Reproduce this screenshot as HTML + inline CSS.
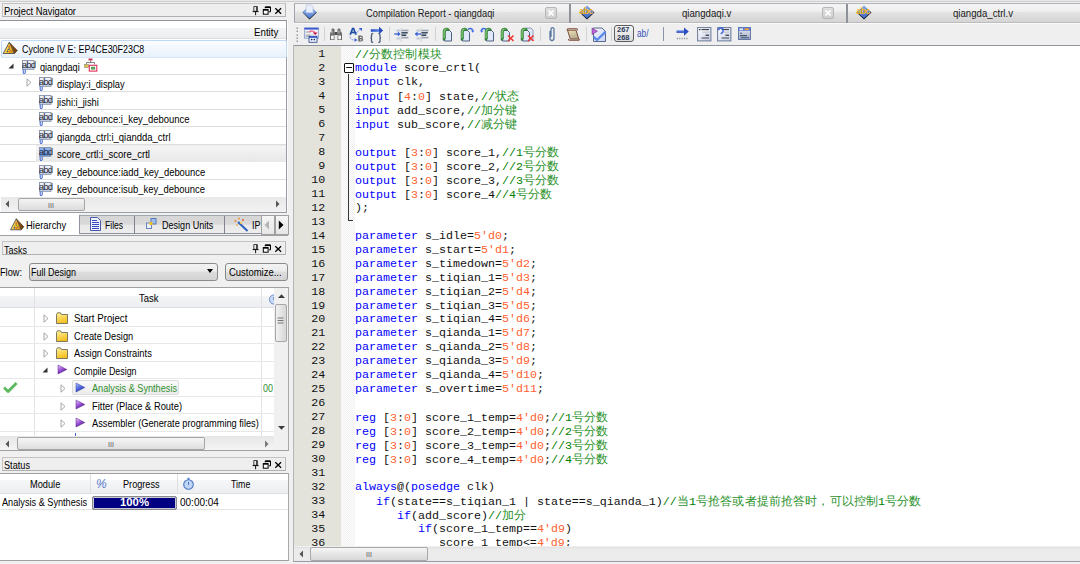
<!DOCTYPE html><html><head><meta charset="utf-8"><style>
html,body{margin:0;padding:0}
body{width:1080px;height:564px;overflow:hidden;position:relative;background:#f0f0f0;font-family:"Liberation Sans",sans-serif}
body div,body span,body svg{position:absolute}
.t{white-space:pre;line-height:1;font-family:"Liberation Sans",sans-serif}
#code .ln{left:0;width:31.8px;text-align:right;font-family:"Liberation Mono",monospace;font-size:11.667px;line-height:11.667px;color:#111;white-space:pre}
#code .cd{left:61.5px;font-family:"Liberation Mono",monospace;font-size:11.667px;line-height:11.667px;color:#111;white-space:pre}
#code b{font-weight:normal}
#code i{font-style:normal;font-size:11.5px;display:inline-block;width:12.15px;text-align:center;opacity:.85}
</style></head><body>
<svg width="0" height="0" style="position:absolute"><defs>
<linearGradient id="gabd" x1="0" y1="0" x2="0" y2="1"><stop offset="0" stop-color="#f4f6fb"/><stop offset="1" stop-color="#c4d0e8"/></linearGradient>
<linearGradient id="gabdS" x1="0" y1="0" x2="0" y2="1"><stop offset="0" stop-color="#90b8f0"/><stop offset="1" stop-color="#5a90e0"/></linearGradient>
</defs></svg>
<div style="left:0px;top:0px;width:1080px;height:1px;background:#e9e9e9"></div>
<div style="left:0px;top:1px;width:1080px;height:1px;background:#cdcdcd"></div>
<div style="left:2px;top:3px;width:282px;height:12px;background:#eeeeee;border:1px solid #c4c4c4;border-right-color:#b8b8b8;border-bottom-color:#b0b0b0"></div>
<span class="t" style="left:4.00px;top:6.41px;font-size:10.5px;color:#000;letter-spacing:0.000px;transform:scaleX(0.8940);transform-origin:0 0;">Project Navigator</span>
<svg style="left:252px;top:5.5px" width="32" height="11" viewBox="0 0 32 11"><path d="M1.8 0.5h3.6v4.8h-3.6z" fill="#e8e8e8" stroke="#333" stroke-width="0.9"/><path d="M4.6 0.8v4.5" stroke="#444" stroke-width="1.2"/><path d="M0.6 5.6h6M3.6 5.6v3.6" stroke="#111" stroke-width="1"/><path d="M13.2 2.3V1h5.3v4.8h-1.6" fill="none" stroke="#000" stroke-width="1"/><path d="M13.2 1.3h5.3" stroke="#000" stroke-width="1.5"/><rect x="11.3" y="3.6" width="4.8" height="4.6" fill="#fff" stroke="#000" stroke-width="1"/><path d="M11.3 3.9h4.8" stroke="#000" stroke-width="1.5"/><path d="M23.3 2.2l5.8 5.6M29.1 2.2l-5.8 5.6" stroke="#000" stroke-width="1.25"/></svg>
<div style="left:0px;top:20px;width:286px;height:191.2px;background:#fff;border-top:1px solid #8f9399;border-right:1px solid #9a9ea4;border-bottom:1px solid #9a9ea4"></div>
<div style="left:0px;top:28px;width:286px;height:10px;background:linear-gradient(#f3f4f6,#eceef1)"></div>
<div style="left:0px;top:38px;width:286px;height:1px;background:#dcdde0"></div>
<span class="t" style="left:253.50px;top:26.51px;font-size:10.5px;color:#000;letter-spacing:0.000px;transform:scaleX(0.9253);transform-origin:0 0;">Entity</span>
<div style="left:1px;top:40px;width:284px;height:16px;background:linear-gradient(#fbfdff,#e8f1fc);border:1px solid #c0daf6;border-bottom-color:#d6e6f8;border-radius:2px"></div>
<div style="left:0px;top:73.6px;width:286px;height:1.4px;background:#dedede"></div>
<div style="left:0px;top:91.1px;width:286px;height:1.4px;background:#dedede"></div>
<div style="left:0px;top:108.6px;width:286px;height:1.4px;background:#dedede"></div>
<div style="left:0px;top:126.1px;width:286px;height:1.4px;background:#dedede"></div>
<div style="left:0px;top:143.60000000000002px;width:286px;height:1.4px;background:#dedede"></div>
<div style="left:0px;top:161.10000000000002px;width:286px;height:1.4px;background:#dedede"></div>
<div style="left:0px;top:178.60000000000002px;width:286px;height:1.4px;background:#dedede"></div>
<div style="left:36px;top:145px;width:250px;height:16px;background:linear-gradient(#f4f4f4,#e8e8e8);border-top:1px solid #ececec"></div>
<span class="t" style="left:22.20px;top:44.21px;font-size:10.5px;color:#000;letter-spacing:0.000px;transform:scaleX(0.8484);transform-origin:0 0;">Cyclone IV E: EP4CE30F23C8</span>
<span class="t" style="left:39.70px;top:61.71px;font-size:10.5px;color:#000;letter-spacing:0.000px;transform:scaleX(0.8717);transform-origin:0 0;">qiangdaqi</span>
<span class="t" style="left:57.00px;top:79.21px;font-size:10.5px;color:#000;letter-spacing:0.000px;transform:scaleX(0.8842);transform-origin:0 0;">display:i_display</span>
<span class="t" style="left:57.00px;top:96.71px;font-size:10.5px;color:#000;letter-spacing:0.000px;transform:scaleX(0.8844);transform-origin:0 0;">jishi:i_jishi</span>
<span class="t" style="left:57.00px;top:114.21px;font-size:10.5px;color:#000;letter-spacing:0.000px;transform:scaleX(0.8964);transform-origin:0 0;">key_debounce:i_key_debounce</span>
<span class="t" style="left:57.00px;top:131.71px;font-size:10.5px;color:#000;letter-spacing:0.000px;transform:scaleX(0.9044);transform-origin:0 0;">qiangda_ctrl:i_qiandda_ctrl</span>
<span class="t" style="left:57.00px;top:149.21px;font-size:10.5px;color:#000;letter-spacing:0.000px;transform:scaleX(0.9098);transform-origin:0 0;">score_crtl:i_score_crtl</span>
<span class="t" style="left:57.00px;top:166.71px;font-size:10.5px;color:#000;letter-spacing:0.000px;transform:scaleX(0.8976);transform-origin:0 0;">key_debounce:iadd_key_debounce</span>
<span class="t" style="left:57.00px;top:184.21px;font-size:10.5px;color:#000;letter-spacing:0.000px;transform:scaleX(0.8983);transform-origin:0 0;">key_debounce:isub_key_debounce</span>
<svg style="left:0px;top:40px" width="20" height="16" viewBox="0 0 20 16"><defs><linearGradient id="gw" x1="0" y1="0" x2="1" y2="0.4"><stop offset="0" stop-color="#fff080"/><stop offset="0.7" stop-color="#f4c020"/><stop offset="1" stop-color="#e09010"/></linearGradient><linearGradient id="gw2" x1="0" y1="0" x2="1" y2="0"><stop offset="0" stop-color="#c07010"/><stop offset="1" stop-color="#603008"/></linearGradient></defs><path d="M9.3 2.3L17.3 10.6L14.5 13.5Z" fill="url(#gw2)" stroke="#4a3a20" stroke-width="0.7" stroke-linejoin="round"/><path d="M9.3 2.3L3.2 13.5H14.5Z" fill="url(#gw)" stroke="#3a4050" stroke-width="0.8" stroke-linejoin="round"/><circle cx="9.2" cy="6.6" r="0.8" fill="#e04a30"/><path d="M9.2 7.2v2.8M7.6 10v1.5M10.8 10v1.5" stroke="#4a5a70" stroke-width="0.7"/><circle cx="7.4" cy="11.6" r="0.7" fill="#3050a0"/><circle cx="9.3" cy="11.6" r="0.7" fill="#e04a30"/><circle cx="8.4" cy="9.4" r="0.6" fill="#3050a0"/></svg>
<svg style="left:8px;top:63px" width="6" height="6" viewBox="0 0 6 6"><path d="M5.5 0.5V5.5H0.5Z" fill="#333"/></svg>
<svg style="left:22px;top:59.5px" width="14" height="15" viewBox="0 0 14 15"><rect x="0.5" y="0.5" width="11.5" height="8.8" fill="url(#gabd)" stroke="#8592a8" stroke-width="0.9"/><text x="-0.2" y="8.3" font-family="Liberation Sans" font-size="9.6" fill="#2a2a38" letter-spacing="-0.9">abd</text><path d="M1.2 9.5v3.5l1 1 1-1V9.5" fill="none" stroke="#3a5fd0" stroke-width="1"/></svg>
<svg style="left:84px;top:57.5px" width="14" height="14" viewBox="0 0 14 14"><rect x="4.5" y="0.5" width="4" height="2" fill="#c83a5a"/><path d="M6.5 2.5v2M2.5 4.5h8M2.5 4.5v2M10.5 4.5v2" stroke="#666" stroke-width="0.8" fill="none"/><rect x="0.5" y="6.5" width="4" height="3" fill="#e0c050" stroke="#8a8a6a" stroke-width="0.6"/><rect x="5.3" y="7.3" width="7.5" height="5.8" fill="#fff" stroke="#e0305a" stroke-width="1.1"/><rect x="7" y="8.8" width="4.2" height="2.8" fill="#5aa05a"/></svg>
<svg style="left:26px;top:78px" width="6" height="9" viewBox="0 0 6 9"><path d="M1 0.8L5 4.5L1 8.2Z" fill="#fff" stroke="#a6a6a6" stroke-width="1"/></svg>
<svg style="left:39px;top:77.0px" width="14" height="15" viewBox="0 0 14 15"><rect x="0.5" y="0.5" width="11.5" height="8.8" fill="url(#gabd)" stroke="#8592a8" stroke-width="0.9"/><text x="-0.2" y="8.3" font-family="Liberation Sans" font-size="9.6" fill="#2a2a38" letter-spacing="-0.9">abd</text><path d="M1.2 9.5v3.5l1 1 1-1V9.5" fill="none" stroke="#3a5fd0" stroke-width="1"/></svg>
<svg style="left:39px;top:94.5px" width="14" height="15" viewBox="0 0 14 15"><rect x="0.5" y="0.5" width="11.5" height="8.8" fill="url(#gabd)" stroke="#8592a8" stroke-width="0.9"/><text x="-0.2" y="8.3" font-family="Liberation Sans" font-size="9.6" fill="#2a2a38" letter-spacing="-0.9">abd</text><path d="M1.2 9.5v3.5l1 1 1-1V9.5" fill="none" stroke="#3a5fd0" stroke-width="1"/></svg>
<svg style="left:39px;top:112.0px" width="14" height="15" viewBox="0 0 14 15"><rect x="0.5" y="0.5" width="11.5" height="8.8" fill="url(#gabd)" stroke="#8592a8" stroke-width="0.9"/><text x="-0.2" y="8.3" font-family="Liberation Sans" font-size="9.6" fill="#2a2a38" letter-spacing="-0.9">abd</text><path d="M1.2 9.5v3.5l1 1 1-1V9.5" fill="none" stroke="#3a5fd0" stroke-width="1"/></svg>
<svg style="left:39px;top:129.5px" width="14" height="15" viewBox="0 0 14 15"><rect x="0.5" y="0.5" width="11.5" height="8.8" fill="url(#gabd)" stroke="#8592a8" stroke-width="0.9"/><text x="-0.2" y="8.3" font-family="Liberation Sans" font-size="9.6" fill="#2a2a38" letter-spacing="-0.9">abd</text><path d="M1.2 9.5v3.5l1 1 1-1V9.5" fill="none" stroke="#3a5fd0" stroke-width="1"/></svg>
<svg style="left:39px;top:147.0px" width="14" height="15" viewBox="0 0 14 15"><rect x="0.5" y="0.5" width="11.5" height="8.8" fill="url(#gabdS)" stroke="#8592a8" stroke-width="0.9"/><text x="-0.2" y="8.3" font-family="Liberation Sans" font-size="9.6" fill="#2a2a38" letter-spacing="-0.9">abd</text><path d="M1.2 9.5v3.5l1 1 1-1V9.5" fill="none" stroke="#3a5fd0" stroke-width="1"/></svg>
<svg style="left:39px;top:164.5px" width="14" height="15" viewBox="0 0 14 15"><rect x="0.5" y="0.5" width="11.5" height="8.8" fill="url(#gabd)" stroke="#8592a8" stroke-width="0.9"/><text x="-0.2" y="8.3" font-family="Liberation Sans" font-size="9.6" fill="#2a2a38" letter-spacing="-0.9">abd</text><path d="M1.2 9.5v3.5l1 1 1-1V9.5" fill="none" stroke="#3a5fd0" stroke-width="1"/></svg>
<svg style="left:39px;top:182.0px" width="14" height="15" viewBox="0 0 14 15"><rect x="0.5" y="0.5" width="11.5" height="8.8" fill="url(#gabd)" stroke="#8592a8" stroke-width="0.9"/><text x="-0.2" y="8.3" font-family="Liberation Sans" font-size="9.6" fill="#2a2a38" letter-spacing="-0.9">abd</text><path d="M1.2 9.5v3.5l1 1 1-1V9.5" fill="none" stroke="#3a5fd0" stroke-width="1"/></svg>
<div style="left:1px;top:196.5px;width:285px;height:15.5px;background:linear-gradient(#e8e8e8,#f2f2f2)"></div>
<div style="left:17.5px;top:197.5px;width:67px;height:13px;background:linear-gradient(#f4f4f4,#dcdcdc);border:1px solid #a5a5a5;border-radius:2px;box-sizing:border-box"></div>
<span class="t" style="left:48.00px;top:201.57px;font-size:7px;color:#555;letter-spacing:0.000px;">III</span>
<svg style="left:5px;top:200px" width="5" height="8" viewBox="0 0 5 8"><path d="M4 0.5L0.5 4L4 7.5Z" fill="#555"/></svg>
<svg style="left:275px;top:200px" width="5" height="8" viewBox="0 0 5 8"><path d="M1 0.5L4.5 4L1 7.5Z" fill="#555"/></svg>
<div style="left:0px;top:234.5px;width:288px;height:1px;background:#9da1a6"></div>
<div style="left:0px;top:213px;width:79px;height:22px;background:#fff"></div>
<div style="left:79px;top:215px;width:55.5px;height:18.5px;background:linear-gradient(#d6d6d6 0%,#d9d9d9 45%,#e9e9e9 52%,#ededed 92%,#fafafa 100%);border-top:1px solid #a2a6ae;box-sizing:border-box"></div>
<div style="left:134.5px;top:215px;width:89.5px;height:18.5px;background:linear-gradient(#d6d6d6 0%,#d9d9d9 45%,#e9e9e9 52%,#ededed 92%,#fafafa 100%);border-top:1px solid #a2a6ae;box-sizing:border-box"></div>
<div style="left:224px;top:215px;width:37px;height:18.5px;background:linear-gradient(#d6d6d6 0%,#d9d9d9 45%,#e9e9e9 52%,#ededed 92%,#fafafa 100%);border-top:1px solid #a2a6ae;box-sizing:border-box"></div>
<div style="left:79px;top:233.3px;width:182px;height:1.2px;background:#8e929a"></div>
<div style="left:78.6px;top:215px;width:1.2px;height:19px;background:#9094a0"></div>
<div style="left:133.9px;top:215.5px;width:1.2px;height:18px;background:#80848e"></div>
<div style="left:223.5px;top:215.5px;width:1.2px;height:18px;background:#80848e"></div>
<span class="t" style="left:26.40px;top:219.71px;font-size:10.5px;color:#000;letter-spacing:0.000px;transform:scaleX(0.8970);transform-origin:0 0;">Hierarchy</span>
<span class="t" style="left:104.90px;top:219.51px;font-size:10.5px;color:#000;letter-spacing:0.000px;transform:scaleX(0.8165);transform-origin:0 0;">Files</span>
<span class="t" style="left:162.00px;top:219.51px;font-size:10.5px;color:#000;letter-spacing:0.000px;transform:scaleX(0.8618);transform-origin:0 0;">Design Units</span>
<span class="t" style="left:251.50px;top:219.51px;font-size:10.5px;color:#000;letter-spacing:0.000px;transform:scaleX(0.8567);transform-origin:0 0;">IP</span>
<svg style="left:8.5px;top:216.5px" width="16" height="15" viewBox="0 0 16 15"><path d="M7.3 1.8L14.8 9.8L12.3 12.8Z" fill="url(#gw2)" stroke="#4a3a20" stroke-width="0.7" stroke-linejoin="round"/><path d="M7.3 1.8L1.5 12.8H12.3Z" fill="url(#gw)" stroke="#3a4050" stroke-width="0.8" stroke-linejoin="round"/><circle cx="7.2" cy="6" r="0.8" fill="#e04a30"/><path d="M7.2 6.6v2.8M5.6 9.4v1.5M8.8 9.4v1.5" stroke="#4a5a70" stroke-width="0.7"/><circle cx="5.4" cy="11" r="0.7" fill="#3050a0"/><circle cx="7.3" cy="11" r="0.7" fill="#e04a30"/></svg>
<svg style="left:90px;top:216.5px" width="11" height="14" viewBox="0 0 11 14"><path d="M0.5 0.5h7l3 3v10h-10z" fill="#eef2ff" stroke="#4b5aa8" stroke-width="1"/><path d="M2 3.5h5M2 5.5h7M2 7.5h7M2 9.5h7M2 11.5h7" stroke="#3a4cc0" stroke-width="1"/></svg>
<svg style="left:146px;top:218px" width="11" height="11" viewBox="0 0 11 11"><rect x="0.5" y="5" width="5" height="5.5" fill="#e8f0ff" stroke="#6c84b8" stroke-width="1"/><rect x="5" y="0.5" width="5" height="5.5" fill="#9cc0f0" stroke="#5a78b0" stroke-width="1"/><rect x="3.5" y="4" width="3" height="3" fill="#f0c020"/></svg>
<svg style="left:234px;top:216.5px" width="15" height="15" viewBox="0 0 15 15"><path d="M4 5L13.5 14" stroke="#3060c0" stroke-width="2"/><circle cx="1.5" cy="4" r="1" fill="#f08030"/><circle cx="5" cy="1.5" r="1" fill="#f0a030"/><circle cx="9" cy="3" r="1" fill="#e06020"/><circle cx="3" cy="8" r="0.9" fill="#f0b040"/><circle cx="7" cy="6" r="1" fill="#ffd040"/></svg>
<div style="left:260.5px;top:215px;width:14px;height:20px;background:linear-gradient(#f5f5f5,#e6e6e6);border:1px solid #a0a0a0;box-sizing:border-box"></div>
<div style="left:274.5px;top:215px;width:14px;height:20px;background:linear-gradient(#f5f5f5,#e6e6e6);border:1px solid #a0a0a0;box-sizing:border-box"></div>
<svg style="left:264px;top:220px" width="6" height="10" viewBox="0 0 6 10"><path d="M5 0.5L0.5 5L5 9.5Z" fill="#b4b4b4"/></svg>
<svg style="left:278px;top:220px" width="7" height="10" viewBox="0 0 7 10"><path d="M0.8 0.5L5.5 5L0.8 9.5Z" fill="#000"/></svg>
<div style="left:287.2px;top:20px;width:1px;height:193px;background:#fbfbfb"></div>
<div style="left:2px;top:241.3px;width:282px;height:12px;background:#eeeeee;border:1px solid #c4c4c4;border-right-color:#b8b8b8;border-bottom-color:#b0b0b0"></div>
<span class="t" style="left:4.00px;top:244.71px;font-size:10.5px;color:#000;letter-spacing:0.000px;transform:scaleX(0.8569);transform-origin:0 0;">Tasks</span>
<svg style="left:252px;top:243.8px" width="32" height="11" viewBox="0 0 32 11"><path d="M1.8 0.5h3.6v4.8h-3.6z" fill="#e8e8e8" stroke="#333" stroke-width="0.9"/><path d="M4.6 0.8v4.5" stroke="#444" stroke-width="1.2"/><path d="M0.6 5.6h6M3.6 5.6v3.6" stroke="#111" stroke-width="1"/><path d="M13.2 2.3V1h5.3v4.8h-1.6" fill="none" stroke="#000" stroke-width="1"/><path d="M13.2 1.3h5.3" stroke="#000" stroke-width="1.5"/><rect x="11.3" y="3.6" width="4.8" height="4.6" fill="#fff" stroke="#000" stroke-width="1"/><path d="M11.3 3.9h4.8" stroke="#000" stroke-width="1.5"/><path d="M23.3 2.2l5.8 5.6M29.1 2.2l-5.8 5.6" stroke="#000" stroke-width="1.25"/></svg>
<span class="t" style="left:-0.50px;top:266.51px;font-size:10.5px;color:#000;letter-spacing:0.000px;transform:scaleX(0.8770);transform-origin:0 0;">Flow:</span>
<div style="left:28.5px;top:262.5px;width:189px;height:18px;background:linear-gradient(#f3f3f3 0%,#ebebeb 45%,#dddddd 50%,#d3d3d3 100%);border:1px solid #8b8b8b;border-radius:3px;box-sizing:border-box"></div>
<span class="t" style="left:30.50px;top:266.51px;font-size:10.5px;color:#000;letter-spacing:0.000px;transform:scaleX(0.8568);transform-origin:0 0;">Full Design</span>
<svg style="left:207px;top:269px" width="6" height="4" viewBox="0 0 6 4"><path d="M0 0H6L3 4Z" fill="#000"/></svg>
<div style="left:224.5px;top:263px;width:63px;height:17.5px;background:linear-gradient(#f3f3f3 0%,#ebebeb 45%,#dddddd 50%,#d3d3d3 100%);border:1px solid #8b8b8b;border-radius:3px;box-sizing:border-box"></div>
<span class="t" style="left:229.00px;top:266.51px;font-size:10.5px;color:#000;letter-spacing:0.000px;transform:scaleX(0.9014);transform-origin:0 0;">Customize...</span>
<div style="left:0px;top:287px;width:289px;height:164px;background:#fff;border-top:1px solid #a0a0a0;border-right:1px solid #a9a9a9;border-bottom:1px solid #a0a0a0;box-sizing:border-box"></div>
<div style="left:0px;top:295.7px;width:273.7px;height:11.8px;background:linear-gradient(#f4f5f7,#eceef1)"></div>
<div style="left:0px;top:307.2px;width:273.7px;height:1px;background:#dedfe2"></div>
<div style="left:34.2px;top:288px;width:1px;height:148px;background:#e2e2e2"></div>
<div style="left:261.3px;top:288px;width:1px;height:148px;background:#e2e2e2"></div>
<span class="t" style="left:139.20px;top:293.11px;font-size:10.5px;color:#000;letter-spacing:0.000px;transform:scaleX(0.9032);transform-origin:0 0;">Task</span>
<svg style="left:267.5px;top:293px" width="7" height="12" viewBox="0 0 7 12"><circle cx="6" cy="6.5" r="4.6" fill="#c8daf4" stroke="#6a90d0" stroke-width="1"/><path d="M5.5 4v3" stroke="#6a90d0" stroke-width="0.9"/></svg>
<div style="left:0px;top:325.5px;width:273.7px;height:1.3px;background:#e8e8e8"></div>
<div style="left:0px;top:343.0px;width:273.7px;height:1.3px;background:#e8e8e8"></div>
<div style="left:0px;top:360.5px;width:273.7px;height:1.3px;background:#e8e8e8"></div>
<div style="left:0px;top:378.0px;width:273.7px;height:1.3px;background:#e8e8e8"></div>
<div style="left:0px;top:395.5px;width:273.7px;height:1.3px;background:#e8e8e8"></div>
<div style="left:0px;top:413.0px;width:273.7px;height:1.3px;background:#e8e8e8"></div>
<div style="left:0px;top:430.5px;width:273.7px;height:1.3px;background:#e8e8e8"></div>
<div style="left:273.7px;top:288px;width:14.3px;height:148px;background:#f0f0f0"></div>
<div style="left:274.5px;top:304.4px;width:12px;height:38px;background:linear-gradient(90deg,#f2f2f2,#e4e4e4 50%,#d6d6d6);border:1px solid #a7a7a7;border-radius:2px;box-sizing:border-box"></div>
<svg style="left:277px;top:317px" width="7" height="8" viewBox="0 0 7 8"><path d="M0.5 1h6M0.5 3.5h6M0.5 6h6" stroke="#666" stroke-width="0.9"/></svg>
<svg style="left:278px;top:294px" width="7" height="4" viewBox="0 0 7 4"><path d="M0 4L3.5 0.3L7 4Z" fill="#3a3a3a"/></svg>
<svg style="left:278px;top:426px" width="7" height="4" viewBox="0 0 7 4"><path d="M0 0L3.5 3.7L7 0Z" fill="#3a3a3a"/></svg>
<div style="left:0px;top:436.3px;width:273.7px;height:13.7px;background:linear-gradient(#e6e6e6,#f4f4f4)"></div>
<div style="left:16.5px;top:437px;width:188px;height:12.5px;background:linear-gradient(#f6f6f6,#dedede);border:1px solid #a5a5a5;border-radius:2px;box-sizing:border-box"></div>
<span class="t" style="left:108.00px;top:440.57px;font-size:7px;color:#555;letter-spacing:0.000px;">III</span>
<svg style="left:5px;top:440px" width="5" height="8" viewBox="0 0 5 8"><path d="M4 0.5L0.5 4L4 7.5Z" fill="#555"/></svg>
<svg style="left:264px;top:440px" width="5" height="8" viewBox="0 0 5 8"><path d="M1 0.5L4.5 4L1 7.5Z" fill="#777"/></svg>
<div style="left:273.7px;top:436.3px;width:14.3px;height:13.7px;background:#f0f0f0"></div>
<svg style="left:42.5px;top:314.0px" width="6" height="9" viewBox="0 0 6 9"><path d="M1 0.8L5 4.5L1 8.2Z" fill="#fff" stroke="#a6a6a6" stroke-width="1"/></svg>
<svg style="left:56px;top:312.0px" width="13" height="12" viewBox="0 0 13 12"><defs><linearGradient id="gf312" x1="0" y1="0" x2="0.3" y2="1"><stop offset="0" stop-color="#fff2a0"/><stop offset="1" stop-color="#f4c020"/></linearGradient></defs><path d="M0.5 2.5V11.5H11.5V2.5H5.5L4.5 0.8H1.5L0.5 2.5Z" fill="url(#gf312)" stroke="#6b6b58" stroke-width="0.9"/></svg>
<span class="t" style="left:73.70px;top:313.11px;font-size:10.5px;color:#000;letter-spacing:0.000px;transform:scaleX(0.9243);transform-origin:0 0;">Start Project</span>
<svg style="left:42.5px;top:331.5px" width="6" height="9" viewBox="0 0 6 9"><path d="M1 0.8L5 4.5L1 8.2Z" fill="#fff" stroke="#a6a6a6" stroke-width="1"/></svg>
<svg style="left:56px;top:329.5px" width="13" height="12" viewBox="0 0 13 12"><defs><linearGradient id="gf329" x1="0" y1="0" x2="0.3" y2="1"><stop offset="0" stop-color="#fff2a0"/><stop offset="1" stop-color="#f4c020"/></linearGradient></defs><path d="M0.5 2.5V11.5H11.5V2.5H5.5L4.5 0.8H1.5L0.5 2.5Z" fill="url(#gf329)" stroke="#6b6b58" stroke-width="0.9"/></svg>
<span class="t" style="left:73.70px;top:330.61px;font-size:10.5px;color:#000;letter-spacing:0.000px;transform:scaleX(0.8820);transform-origin:0 0;">Create Design</span>
<svg style="left:42.5px;top:349.0px" width="6" height="9" viewBox="0 0 6 9"><path d="M1 0.8L5 4.5L1 8.2Z" fill="#fff" stroke="#a6a6a6" stroke-width="1"/></svg>
<svg style="left:56px;top:347.0px" width="13" height="12" viewBox="0 0 13 12"><defs><linearGradient id="gf347" x1="0" y1="0" x2="0.3" y2="1"><stop offset="0" stop-color="#fff2a0"/><stop offset="1" stop-color="#f4c020"/></linearGradient></defs><path d="M0.5 2.5V11.5H11.5V2.5H5.5L4.5 0.8H1.5L0.5 2.5Z" fill="url(#gf347)" stroke="#6b6b58" stroke-width="0.9"/></svg>
<span class="t" style="left:73.70px;top:348.11px;font-size:10.5px;color:#000;letter-spacing:0.000px;transform:scaleX(0.8887);transform-origin:0 0;">Assign Constraints</span>
<svg style="left:42px;top:367.0px" width="6" height="6" viewBox="0 0 6 6"><path d="M5.5 0.5V5.5H0.5Z" fill="#333"/></svg>
<svg style="left:57px;top:364.0px" width="11" height="11" viewBox="0 0 11 11"><defs><linearGradient id="gp364" x1="0" y1="0" x2="0.6" y2="1"><stop offset="0" stop-color="#f0c8ff"/><stop offset="0.55" stop-color="#9a50d8"/><stop offset="1" stop-color="#4a1a80"/></linearGradient></defs><path d="M1 1L9.8 5.5L1 10Z" fill="url(#gp364)" stroke="#4a1a80" stroke-width="0.5" stroke-linejoin="round"/></svg>
<span class="t" style="left:73.70px;top:365.61px;font-size:10.5px;color:#000;letter-spacing:0.000px;transform:scaleX(0.8433);transform-origin:0 0;">Compile Design</span>
<div style="left:71.7px;top:379.7px;width:107.5px;height:15.5px;background:linear-gradient(#fafafa,#ececec);border:1px solid #dcdcdc;border-radius:2px;box-sizing:border-box"></div>
<svg style="left:60px;top:384.0px" width="6" height="9" viewBox="0 0 6 9"><path d="M1 0.8L5 4.5L1 8.2Z" fill="#fff" stroke="#a6a6a6" stroke-width="1"/></svg>
<svg style="left:75px;top:381.5px" width="11" height="11" viewBox="0 0 11 11"><defs><linearGradient id="gp381" x1="0" y1="0" x2="0.6" y2="1"><stop offset="0" stop-color="#b8c8ff"/><stop offset="0.55" stop-color="#5068e0"/><stop offset="1" stop-color="#2a3aa0"/></linearGradient></defs><path d="M1 1L9.8 5.5L1 10Z" fill="url(#gp381)" stroke="#2a3aa0" stroke-width="0.5" stroke-linejoin="round"/></svg>
<span class="t" style="left:91.50px;top:383.11px;font-size:10.5px;color:#2f8f2f;letter-spacing:0.000px;transform:scaleX(0.8721);transform-origin:0 0;">Analysis &amp; Synthesis</span>
<svg style="left:60px;top:401.5px" width="6" height="9" viewBox="0 0 6 9"><path d="M1 0.8L5 4.5L1 8.2Z" fill="#fff" stroke="#a6a6a6" stroke-width="1"/></svg>
<svg style="left:75px;top:399.0px" width="11" height="11" viewBox="0 0 11 11"><defs><linearGradient id="gp399" x1="0" y1="0" x2="0.6" y2="1"><stop offset="0" stop-color="#f0c8ff"/><stop offset="0.55" stop-color="#9a50d8"/><stop offset="1" stop-color="#4a1a80"/></linearGradient></defs><path d="M1 1L9.8 5.5L1 10Z" fill="url(#gp399)" stroke="#4a1a80" stroke-width="0.5" stroke-linejoin="round"/></svg>
<span class="t" style="left:91.50px;top:400.61px;font-size:10.5px;color:#000;letter-spacing:0.000px;transform:scaleX(0.8915);transform-origin:0 0;">Fitter (Place &amp; Route)</span>
<svg style="left:60px;top:419.0px" width="6" height="9" viewBox="0 0 6 9"><path d="M1 0.8L5 4.5L1 8.2Z" fill="#fff" stroke="#a6a6a6" stroke-width="1"/></svg>
<svg style="left:75px;top:416.5px" width="11" height="11" viewBox="0 0 11 11"><defs><linearGradient id="gp416" x1="0" y1="0" x2="0.6" y2="1"><stop offset="0" stop-color="#f0c8ff"/><stop offset="0.55" stop-color="#9a50d8"/><stop offset="1" stop-color="#4a1a80"/></linearGradient></defs><path d="M1 1L9.8 5.5L1 10Z" fill="url(#gp416)" stroke="#4a1a80" stroke-width="0.5" stroke-linejoin="round"/></svg>
<span class="t" style="left:91.50px;top:418.11px;font-size:10.5px;color:#000;letter-spacing:0.000px;transform:scaleX(0.8795);transform-origin:0 0;">Assembler (Generate programming files)</span>
<span class="t" style="left:263.20px;top:383.11px;font-size:10.5px;color:#2f8f2f;letter-spacing:0.000px;transform:scaleX(0.8562);transform-origin:0 0;">00</span>
<svg style="left:2.5px;top:382px" width="15" height="12" viewBox="0 0 15 12"><path d="M1.5 6.5L5 10L13.5 1.5" fill="none" stroke="#2a7a2a" stroke-width="1" opacity="0.35" transform="translate(0.6,0.8)"/><path d="M1 5.5L5 9.5L13.5 1" fill="none" stroke="#5cb85c" stroke-width="2.6" stroke-linejoin="round"/></svg>
<div style="left:75px;top:433px;width:1px;height:3px;background:#4060d0"></div>
<div style="left:2px;top:457px;width:282px;height:12px;background:#eeeeee;border:1px solid #c4c4c4;border-right-color:#b8b8b8;border-bottom-color:#b0b0b0"></div>
<span class="t" style="left:4.00px;top:460.41px;font-size:10.5px;color:#000;letter-spacing:0.000px;transform:scaleX(0.8734);transform-origin:0 0;">Status</span>
<svg style="left:252px;top:459.5px" width="32" height="11" viewBox="0 0 32 11"><path d="M1.8 0.5h3.6v4.8h-3.6z" fill="#e8e8e8" stroke="#333" stroke-width="0.9"/><path d="M4.6 0.8v4.5" stroke="#444" stroke-width="1.2"/><path d="M0.6 5.6h6M3.6 5.6v3.6" stroke="#111" stroke-width="1"/><path d="M13.2 2.3V1h5.3v4.8h-1.6" fill="none" stroke="#000" stroke-width="1"/><path d="M13.2 1.3h5.3" stroke="#000" stroke-width="1.5"/><rect x="11.3" y="3.6" width="4.8" height="4.6" fill="#fff" stroke="#000" stroke-width="1"/><path d="M11.3 3.9h4.8" stroke="#000" stroke-width="1.5"/><path d="M23.3 2.2l5.8 5.6M29.1 2.2l-5.8 5.6" stroke="#000" stroke-width="1.25"/></svg>
<div style="left:0px;top:473.3px;width:289px;height:88px;background:#fff;border-top:1px solid #a0a0a0;border-right:1px solid #a9a9a9;border-bottom:1px solid #a0a0a0;box-sizing:border-box"></div>
<div style="left:0px;top:480px;width:288px;height:13px;background:linear-gradient(#f6f7f8,#eceef1)"></div>
<div style="left:0px;top:492.7px;width:288px;height:1px;background:#dcdde0"></div>
<div style="left:90.2px;top:474px;width:1px;height:19px;background:#e0e0e0"></div>
<div style="left:177.3px;top:474px;width:1px;height:19px;background:#e0e0e0"></div>
<div style="left:0px;top:508.8px;width:288px;height:1px;background:#e4e4e4"></div>
<span class="t" style="left:29.50px;top:478.51px;font-size:10.5px;color:#000;letter-spacing:0.000px;transform:scaleX(0.8799);transform-origin:0 0;">Module</span>
<span class="t" style="left:123.20px;top:478.51px;font-size:10.5px;color:#000;letter-spacing:0.000px;transform:scaleX(0.8711);transform-origin:0 0;">Progress</span>
<span class="t" style="left:230.70px;top:478.51px;font-size:10.5px;color:#000;letter-spacing:0.000px;transform:scaleX(0.8413);transform-origin:0 0;">Time</span>
<span class="t" style="left:2.40px;top:496.91px;font-size:10.5px;color:#000;letter-spacing:0.000px;transform:scaleX(0.8721);transform-origin:0 0;">Analysis &amp; Synthesis</span>
<span class="t" style="left:180.20px;top:496.91px;font-size:10.5px;color:#000;letter-spacing:0.000px;transform:scaleX(0.9517);transform-origin:0 0;">00:00:04</span>
<svg style="left:96px;top:477px" width="12" height="13" viewBox="0 0 12 13"><text x="0" y="11" font-family="Liberation Sans" font-style="italic" font-size="12" fill="#5a7ad0">%</text></svg>
<svg style="left:183px;top:477px" width="11" height="13" viewBox="0 0 11 13"><circle cx="5.5" cy="7.5" r="4.8" fill="#c0d4f4" stroke="#4a78c8" stroke-width="1.1"/><rect x="4.5" y="0.8" width="2" height="2" fill="#4a78c8"/><path d="M5.5 5v3" stroke="#4a78c8" stroke-width="1"/></svg>
<div style="left:91.7px;top:495.5px;width:85px;height:14px;background:#000080;border:1px solid #8a8a8a;border-radius:2px;box-sizing:border-box;box-shadow:inset 0 0 0 1px #c8c8d8"></div>
<span class="t" style="left:120.30px;top:497.11px;font-size:10.5px;color:#fff;letter-spacing:0.000px;transform:scaleX(1.0799);transform-origin:0 0;font-weight:bold;">100%</span>
<div style="left:294px;top:3px;width:275px;height:19.5px;background:linear-gradient(#f4f4f4 0%,#efefef 40%,#e2e2e2 48%,#d4d4d4 100%);border-top:1.5px solid #b0b3b9;border-left:1px solid #a0a4ac;border-bottom:1px solid #bcbcbc;box-sizing:border-box"></div>
<span class="t" style="left:366.30px;top:8.21px;font-size:10.5px;color:#1a1a1a;letter-spacing:0.000px;transform:scaleX(0.8870);transform-origin:0 0;">Compilation Report - qiangdaqi</span>
<div style="left:569px;top:3px;width:277px;height:19.5px;background:linear-gradient(#f4f4f4 0%,#efefef 40%,#e2e2e2 48%,#d4d4d4 100%);border-top:1.5px solid #b0b3b9;border-left:1px solid #a0a4ac;border-bottom:1px solid #bcbcbc;box-sizing:border-box"></div>
<div style="left:568.5px;top:4px;width:2px;height:18.5px;background:#8e9298"></div>
<span class="t" style="left:682.00px;top:8.21px;font-size:10.5px;color:#1a1a1a;letter-spacing:0.000px;transform:scaleX(0.9179);transform-origin:0 0;">qiangdaqi.v</span>
<div style="left:846px;top:3px;width:240px;height:19.5px;background:linear-gradient(#f4f4f4 0%,#efefef 40%,#e2e2e2 48%,#d4d4d4 100%);border-top:1.5px solid #b0b3b9;border-left:1px solid #a0a4ac;border-bottom:1px solid #bcbcbc;box-sizing:border-box"></div>
<div style="left:845.5px;top:4px;width:2px;height:18.5px;background:#8e9298"></div>
<span class="t" style="left:953.00px;top:8.21px;font-size:10.5px;color:#1a1a1a;letter-spacing:0.000px;transform:scaleX(0.9178);transform-origin:0 0;">qiangda_ctrl.v</span>
<div style="left:545.2px;top:7.3px;width:11.5px;height:11.5px;background:linear-gradient(#e0e0e0,#cfcfcf);border:1px solid #b5b5b5;border-radius:2px;box-sizing:border-box"></div>
<svg style="left:548.2px;top:10.3px" width="6" height="6" viewBox="0 0 6 6"><path d="M0.5 0.5L5.5 5.5M5.5 0.5L0.5 5.5" stroke="#fff" stroke-width="1.6"/></svg>
<div style="left:822px;top:7.3px;width:11.5px;height:11.5px;background:linear-gradient(#e0e0e0,#cfcfcf);border:1px solid #b5b5b5;border-radius:2px;box-sizing:border-box"></div>
<svg style="left:825px;top:10.3px" width="6" height="6" viewBox="0 0 6 6"><path d="M0.5 0.5L5.5 5.5M5.5 0.5L0.5 5.5" stroke="#fff" stroke-width="1.6"/></svg>
<svg style="left:302.3px;top:3.8px" width="16" height="16" viewBox="0 0 16 16"><defs><linearGradient id="gd" x1="0" y1="0" x2="0" y2="1"><stop offset="0" stop-color="#b0c8f0"/><stop offset="1" stop-color="#4a7ad8"/></linearGradient><linearGradient id="gd2" x1="0" y1="0" x2="0" y2="1"><stop offset="0" stop-color="#8aaee8"/><stop offset="1" stop-color="#3a64c0"/></linearGradient></defs><path d="M7.5 2.2L14.8 8.6L7.5 15.4L0.6 8.6Z" fill="#111"/><path d="M7.5 1.5L14.5 8L7.5 14.5L0.5 8Z" fill="url(#gd)"/><path d="M4 1h5.5l1.5 1.5V8.8H4z" fill="#e8eefa" stroke="#b0bcd8" stroke-width="0.6"/></svg>
<svg style="left:579.2px;top:3.8px" width="16" height="16" viewBox="0 0 16 16"><path d="M8 2.2L15.5 8.6L8 15.4L0.6 8.6Z" fill="#111"/><path d="M8 1.5L15 8L8 14.5L1 8Z" fill="url(#gd2)"/><text x="0.3" y="9.8" font-family="Liberation Sans" font-weight="bold" font-size="8.5" fill="#f8b818" letter-spacing="-0.3">abc</text></svg>
<svg style="left:856px;top:3.8px" width="16" height="16" viewBox="0 0 16 16"><path d="M8 2.2L15.5 8.6L8 15.4L0.6 8.6Z" fill="#111"/><path d="M8 1.5L15 8L8 14.5L1 8Z" fill="url(#gd2)"/><text x="0.3" y="9.8" font-family="Liberation Sans" font-weight="bold" font-size="8.5" fill="#f8b818" letter-spacing="-0.3">abc</text></svg>
<div style="left:293px;top:22.5px;width:787px;height:1.3px;background:#fbfbfb"></div>
<div style="left:293px;top:23.5px;width:787px;height:21.3px;background:#efefef"></div>
<div style="left:293px;top:44.8px;width:787px;height:1px;background:#8f939b"></div>
<svg style="left:296px;top:27.0px" width="3" height="3" viewBox="0 0 3 3"><rect x="0.5" y="0.5" width="1.5" height="1.5" fill="#9a9a9a"/></svg>
<svg style="left:296px;top:30.3px" width="3" height="3" viewBox="0 0 3 3"><rect x="0.5" y="0.5" width="1.5" height="1.5" fill="#9a9a9a"/></svg>
<svg style="left:296px;top:33.6px" width="3" height="3" viewBox="0 0 3 3"><rect x="0.5" y="0.5" width="1.5" height="1.5" fill="#9a9a9a"/></svg>
<svg style="left:296px;top:36.9px" width="3" height="3" viewBox="0 0 3 3"><rect x="0.5" y="0.5" width="1.5" height="1.5" fill="#9a9a9a"/></svg>
<svg style="left:296px;top:40.2px" width="3" height="3" viewBox="0 0 3 3"><rect x="0.5" y="0.5" width="1.5" height="1.5" fill="#9a9a9a"/></svg>
<div style="left:323.6px;top:27px;width:1px;height:14px;background:#d2d2d2"></div>
<div style="left:388.7px;top:27px;width:1px;height:14px;background:#d2d2d2"></div>
<div style="left:434.5px;top:27px;width:1px;height:14px;background:#d2d2d2"></div>
<div style="left:540.3px;top:27px;width:1px;height:14px;background:#d2d2d2"></div>
<div style="left:585.5px;top:27px;width:1px;height:14px;background:#d2d2d2"></div>
<div style="left:610.5px;top:27px;width:1px;height:14px;background:#d2d2d2"></div>
<div style="left:662.5px;top:27px;width:1.5px;height:14px;background:#8a94a6"></div>
<svg style="left:303.5px;top:26.5px" width="16" height="16" viewBox="0 0 16 16"><defs><linearGradient id="gwin" x1="0" y1="0" x2="0" y2="1"><stop offset="0" stop-color="#fafaff"/><stop offset="1" stop-color="#dde0f0"/></linearGradient></defs><rect x="0.5" y="0.8" width="14" height="10.5" fill="url(#gwin)" stroke="#8aa0d0" stroke-width="0.8"/><rect x="0.5" y="0.8" width="14" height="1.8" fill="#3a5ad0"/><rect x="1.5" y="4" width="5" height="2" fill="#c8c8c8"/><rect x="1.5" y="7.5" width="5" height="2.5" fill="#b8b8b8"/><path d="M5 5Q8 2.8 11 5.5" fill="none" stroke="#f07090" stroke-width="1.4"/><path d="M8.8 5.5h4.8l-2.4 2.6z" fill="#d0103a"/><rect x="5" y="9.3" width="8" height="6" fill="#e8ecf8" stroke="#2a4488" stroke-width="0.8"/><rect x="5" y="9.3" width="8" height="1.5" fill="#2a50c0"/><circle cx="7.7" cy="12.6" r="0.8" fill="#1a2a58"/><circle cx="10.3" cy="12.6" r="0.8" fill="#1a2a58"/></svg>
<svg style="left:328.5px;top:27.5px" width="15" height="13" viewBox="0 0 15 13"><path d="M1 12V6Q1 4 2.5 3.5V1.5Q2.5 0.5 4 0.5Q5.5 0.5 5.5 1.5V12z" fill="#6a6a6a"/><path d="M8.5 12V1.5Q8.5 0.5 10 0.5Q11.5 0.5 11.5 1.5V3.5Q13 4 13 6V12z" fill="#6a6a6a"/><rect x="5.5" y="4" width="3" height="3" fill="#4a4a4a"/><rect x="2" y="7.5" width="2.8" height="3.8" fill="#f4f4f4"/><rect x="9.2" y="7.5" width="2.8" height="3.8" fill="#f4f4f4"/><path d="M3 2.5v3M10 2.5v3" stroke="#d8d8d8" stroke-width="0.8"/></svg>
<svg style="left:348.5px;top:26.5px" width="16" height="16" viewBox="0 0 16 16"><path d="M0.3 7.8L3 0.8H5.2L7.9 7.8H6L5.4 6.2H2.8L2.2 7.8Z M3.3 4.8H4.9L4.1 2.6Z" fill="#1e4ea8" fill-rule="evenodd"/><path d="M9.3 8.5h2.6q2 0 2 1.6q0 .9-.8 1.2q1.1.3 1.1 1.5q0 1.8-2.2 1.8H9.3Z M10.9 9.8v1.2h1q.8 0 .8-.6t-.8-.6z M10.9 12.2v1.3h1.1q.9 0 .9-.65t-.9-.65z" fill="#666" fill-rule="evenodd"/><path d="M7.3 6L11.3 2" stroke="#3a5ad8" stroke-width="1" stroke-dasharray="1.1 0.9"/><path d="M9.8 1H13V4.2z" fill="#3a5ad8"/><path d="M1 9.5Q1.5 13 5.5 13" fill="none" stroke="#5a7ae0" stroke-width="1" stroke-dasharray="1.1 0.9"/><path d="M5.5 11.2L8.5 13L5.5 14.8z" fill="#3a5ad8"/></svg>
<svg style="left:370px;top:26.5px" width="14" height="16" viewBox="0 0 14 16"><defs><linearGradient id="garr" x1="0" y1="0" x2="1" y2="0"><stop offset="0" stop-color="#2a50c8"/><stop offset="1" stop-color="#5a8ae8"/></linearGradient></defs><rect x="0.8" y="2.2" width="9" height="2.6" fill="url(#garr)"/><path d="M9 -0.3L13.2 3.5L9 7.3z" fill="#2a4ac0"/><path d="M3.2 6.3Q1.5 6.3 1.5 8v2q0 .8-1 .9q1 .1 1 .9v2.2q0 1.6 1.7 1.6M8.3 6.3q1.7 0 1.7 1.7v2q0 .8 1 .9q-1 .1-1 .9v2.2q0 1.6-1.7 1.6" fill="none" stroke="#4a5a78" stroke-width="1.3"/></svg>
<svg style="left:394.3px;top:27.5px" width="16" height="15" viewBox="0 0 16 15"><path d="M7.2 0.5v13.5" stroke="#8a9098" stroke-width="0.7" stroke-dasharray="0.8 1.2"/><path d="M2.5 2.5h4M2.5 10.5h4" stroke="#c4cad2" stroke-width="1.8"/><path d="M7.5 2.5h7" stroke="#9aa4b2" stroke-width="1.6"/><path d="M7.5 4.8h6.2" stroke="#34465e" stroke-width="1.5"/><path d="M7.5 7.2h4.8" stroke="#34465e" stroke-width="1.6"/><path d="M7.5 9.6h7" stroke="#9aa4b2" stroke-width="1.6"/><path d="M0.3 6h4.5" stroke="#3a62d8" stroke-width="1.4"/><path d="M3.8 3.5L6.6 6L3.8 8.5z" fill="#3a62d8"/></svg>
<svg style="left:413.9px;top:27.5px" width="16" height="15" viewBox="0 0 16 15"><path d="M7.2 0.5v13.5" stroke="#8a9098" stroke-width="0.7" stroke-dasharray="0.8 1.2"/><path d="M2.5 2.5h4M2.5 10.5h4" stroke="#c4cad2" stroke-width="1.8"/><path d="M7.5 2.5h7" stroke="#9aa4b2" stroke-width="1.6"/><path d="M7.5 4.8h6.2" stroke="#34465e" stroke-width="1.5"/><path d="M7.5 7.2h4.8" stroke="#34465e" stroke-width="1.6"/><path d="M7.5 9.6h7" stroke="#9aa4b2" stroke-width="1.6"/><path d="M2.5 6h4.7" stroke="#3a62d8" stroke-width="1.4"/><path d="M3.5 3.5L0.6 6L3.5 8.5z" fill="#3a62d8"/></svg>
<svg style="left:442px;top:27px" width="11" height="15" viewBox="0 0 11 15"><path d="M2.5 3.5h5l2 2v8.5h-7z" fill="#dfe8f8" stroke="#3e5078" stroke-width="0.9"/><path d="M1 13.5V4.5Q1 1 4.5 1Q7.5 1 7.5 3.5H4.5Q3.5 3.5 3.5 5V12Z" fill="#3f9a3f" stroke="#2a6a2a" stroke-width="0.5"/><path d="M2 11V5Q2 2 4.5 2" fill="none" stroke="#a8e0a0" stroke-width="0.8"/></svg>
<svg style="left:460px;top:27px" width="15" height="15" viewBox="0 0 15 15"><path d="M2.5 3.5h5l2 2v8.5h-7z" fill="#dfe8f8" stroke="#3e5078" stroke-width="0.9"/><path d="M1 13.5V4.5Q1 1 4.5 1Q7.5 1 7.5 3.5H4.5Q3.5 3.5 3.5 5V12Z" fill="#3f9a3f" stroke="#2a6a2a" stroke-width="0.5"/><path d="M2 11V5Q2 2 4.5 2" fill="none" stroke="#a8e0a0" stroke-width="0.8"/><path d="M8 2.5q3-2.5 5 1" fill="none" stroke="#3a6ae0" stroke-width="1.4"/><path d="M11 3.5h3.5l-1.8 2.2z" fill="#3a6ae0"/></svg>
<svg style="left:480px;top:27px" width="15" height="15" viewBox="0 0 15 15"><path d="M6.5 3.5h5l2 2v8.5h-7z" fill="#dfe8f8" stroke="#3e5078" stroke-width="0.9"/><path d="M5 13.5V4.5Q5 1 8.5 1Q11.5 1 11.5 3.5H8.5Q7.5 3.5 7.5 5V12Z" fill="#3f9a3f" stroke="#2a6a2a" stroke-width="0.5"/><path d="M6 11V5Q6 2 8.5 2" fill="none" stroke="#a8e0a0" stroke-width="0.8"/><path d="M6 2.5q-3-2.5-5 1" fill="none" stroke="#3a6ae0" stroke-width="1.4"/><path d="M0 3.5h3.5l-1.8 2.2z" fill="#3a6ae0"/></svg>
<svg style="left:500px;top:27px" width="15" height="15" viewBox="0 0 15 15"><path d="M2.5 3.5h5l2 2v8.5h-7z" fill="#dfe8f8" stroke="#3e5078" stroke-width="0.9"/><path d="M1 13.5V4.5Q1 1 4.5 1Q7.5 1 7.5 3.5H4.5Q3.5 3.5 3.5 5V12Z" fill="#3f9a3f" stroke="#2a6a2a" stroke-width="0.5"/><path d="M2 11V5Q2 2 4.5 2" fill="none" stroke="#a8e0a0" stroke-width="0.8"/><path d="M8 8.5l5.5 5.5M13.5 8.5L8 14" stroke="#f03a3a" stroke-width="1.6"/></svg>
<svg style="left:520px;top:27px" width="15" height="15" viewBox="0 0 15 15"><path d="M6 1h5l2 2v10H6z" fill="#dfe6f4" stroke="#7a8ab0" stroke-width="0.8"/><path d="M2.5 3.5h5l2 2v8.5h-7z" fill="#dfe8f8" stroke="#3e5078" stroke-width="0.9"/><path d="M1 13.5V4.5Q1 1 4.5 1Q7.5 1 7.5 3.5H4.5Q3.5 3.5 3.5 5V12Z" fill="#3f9a3f" stroke="#2a6a2a" stroke-width="0.5"/><path d="M2 11V5Q2 2 4.5 2" fill="none" stroke="#a8e0a0" stroke-width="0.8"/><path d="M8 8.5l5.5 5.5M13.5 8.5L8 14" stroke="#f03a3a" stroke-width="1.6"/></svg>
<svg style="left:548px;top:27px" width="8" height="15" viewBox="0 0 8 15"><path d="M2 4v7q0 2.5 2 2.5t2-2.5V2.5q0-1.8-1.5-1.8T3 2.5V10" fill="none" stroke="#5a78a0" stroke-width="1.3"/></svg>
<svg style="left:566px;top:28px" width="14" height="13" viewBox="0 0 14 13"><defs><linearGradient id="gscr" x1="0" y1="0" x2="0.4" y2="1"><stop offset="0" stop-color="#f0e4b8"/><stop offset="1" stop-color="#b8ac90"/></linearGradient></defs><path d="M1.5 2.2h8.5l2.8 8.8H4.3z" fill="url(#gscr)" stroke="#7a4a38" stroke-width="1"/><path d="M1 2.3q0-1.5 1.5-1.5h7.8q1.3 0 1 1.5" fill="none" stroke="#7a4a38" stroke-width="1.1"/><path d="M2.5 11q0 1.3 1.5 1.3h8.3q1.2 0 1-1.3" fill="none" stroke="#7a4a38" stroke-width="1.1"/></svg>
<svg style="left:590.5px;top:26.5px" width="16" height="16" viewBox="0 0 16 16"><defs><linearGradient id="gchk" x1="0" y1="0" x2="1" y2="1"><stop offset="0" stop-color="#f4f6ff"/><stop offset="1" stop-color="#c8d4f4"/></linearGradient></defs><path d="M2.5 1h8.5l3.5 3.5V14.5H2.5z" fill="url(#gchk)" stroke="#4a5a88" stroke-width="0.9"/><path d="M1 1v6.5L6.5 4.2z" fill="#c060d8" stroke="#5a2a7a" stroke-width="0.5"/><path d="M2.8 9.8L6 13L14.5 4.8" fill="none" stroke="#5a8ae8" stroke-width="2.4" stroke-linejoin="round"/></svg>
<div style="left:614.2px;top:25.2px;width:19.4px;height:17.2px;background:linear-gradient(#f4f4f4,#dcdcdc);border:1.5px solid #5e5e5e;border-radius:3px;box-sizing:border-box"></div>
<span class="t" style="left:617.30px;top:26.25px;font-size:7.5px;color:#2a3a58;letter-spacing:0.000px;transform:scaleX(0.9988);transform-origin:0 0;font-weight:bold;">267</span>
<span class="t" style="left:617.30px;top:34.05px;font-size:7.5px;color:#2a3a58;letter-spacing:0.000px;transform:scaleX(0.9988);transform-origin:0 0;font-weight:bold;">268</span>
<span class="t" style="left:637.00px;top:29.03px;font-size:10px;color:#3552b8;letter-spacing:0.000px;transform:scaleX(0.8272);transform-origin:0 0;">ab/</span>
<svg style="left:676px;top:27px" width="14" height="13" viewBox="0 0 14 13"><defs><linearGradient id="garr2" x1="0" y1="0" x2="0" y2="1"><stop offset="0" stop-color="#6a90f0"/><stop offset="1" stop-color="#2a48b8"/></linearGradient></defs><path d="M0.5 3.3H8.5V5.9H0.5z" fill="url(#garr2)"/><path d="M8 0.5L12.8 4.6L8 8.7z" fill="#2f4fc0"/><path d="M0.8 11.5h11.5" stroke="#8a8a92" stroke-width="1.3" stroke-dasharray="1.1 1.3"/></svg>
<svg style="left:697px;top:26.5px" width="15" height="15" viewBox="0 0 15 15"><defs><linearGradient id="gdoc" x1="0" y1="0" x2="1" y2="1"><stop offset="0" stop-color="#ffffff"/><stop offset="1" stop-color="#c4cce8"/></linearGradient></defs><rect x="0.6" y="0.6" width="13.3" height="13.3" fill="url(#gdoc)" stroke="#6a7a98" stroke-width="1"/><path d="M4.5 2.6h7.5" stroke="#333" stroke-width="1"/><path d="M5.5 5.2h6.5" stroke="#c8ccd4" stroke-width="1.4"/><path d="M8.5 8.2h3.5" stroke="#222" stroke-width="1.1"/><path d="M4.5 11h7.5" stroke="#7a7e86" stroke-width="1.6"/><rect x="2" y="2" width="1.5" height="1.2" fill="#333"/></svg>
<svg style="left:717px;top:26.5px" width="15" height="15" viewBox="0 0 15 15"><defs><linearGradient id="gdoc" x1="0" y1="0" x2="1" y2="1"><stop offset="0" stop-color="#ffffff"/><stop offset="1" stop-color="#c4cce8"/></linearGradient></defs><rect x="0.6" y="0.6" width="13.3" height="13.3" fill="url(#gdoc)" stroke="#6a7a98" stroke-width="1"/><path d="M4.5 2.6h7.5" stroke="#333" stroke-width="1"/><path d="M5.5 5.2h6.5" stroke="#c8ccd4" stroke-width="1.4"/><path d="M8.5 8.2h3.5" stroke="#222" stroke-width="1.1"/><path d="M4.5 11h7.5" stroke="#7a7e86" stroke-width="1.6"/><path d="M1.5 3.2q0-2.2 2.6-2.2t2.2 2.4-2.6 3.5" fill="none" stroke="#3a62d8" stroke-width="1.3"/></svg>
<svg style="left:738px;top:27px" width="13" height="13" viewBox="0 0 13 13"><defs><linearGradient id="gdi3" x1="0" y1="0" x2="0" y2="1"><stop offset="0" stop-color="#f0f2fa"/><stop offset="1" stop-color="#98a4c0"/></linearGradient></defs><rect x="0.5" y="0.5" width="12" height="12" fill="url(#gdi3)" stroke="#5a70a0" stroke-width="0.9"/><rect x="0.5" y="0.5" width="12" height="3.2" fill="#4a74d8"/><rect x="1.5" y="1.3" width="3.5" height="1.8" fill="#e8e8e8"/><rect x="6.5" y="1.3" width="4.5" height="1.8" fill="#f0a040"/><path d="M2 6.3h2M2 8.6h7M3 10.8h8" stroke="#4a5a70" stroke-width="1.1"/></svg>
<div style="left:292.5px;top:45px;width:1px;height:517px;background:#b4b6bc"></div>
<div style="left:293.5px;top:45.8px;width:786.5px;height:500.7px;background:#fff"></div>
<div style="left:293.5px;top:45.8px;width:47.8px;height:500.7px;background:#e3e3dc"></div>
<div style="left:341.3px;top:45.8px;width:13.7px;height:500.7px;background-color:#fff;background-image:conic-gradient(#efefef 25%,#fff 0 50%,#efefef 0 75%,#fff 0);background-size:2px 2px"></div>
<div id="code" style="left:293.5px;top:45.8px;width:786.5px;height:500.7px;overflow:hidden">
<div class="ln" style="top:3.46px">1</div>
<div class="cd" style="top:3.46px"><b style="color:#008000">//<i>分</i><i>数</i><i>控</i><i>制</i><i>模</i><i>块</i></b></div>
<div class="ln" style="top:17.42px">2</div>
<div class="cd" style="top:17.42px"><b style="color:#0000ff">module</b> score_crtl(</div>
<div class="ln" style="top:31.38px">3</div>
<div class="cd" style="top:31.38px"><b style="color:#0000ff">input</b> clk,</div>
<div class="ln" style="top:45.34px">4</div>
<div class="cd" style="top:45.34px"><b style="color:#0000ff">input</b> [<b style="color:#ff6030">4</b>:<b style="color:#ff6030">0</b>] state,<b style="color:#008000">//<i>状</i><i>态</i></b></div>
<div class="ln" style="top:59.30px">5</div>
<div class="cd" style="top:59.30px"><b style="color:#0000ff">input</b> add_score,<b style="color:#008000">//<i>加</i><i>分</i><i>键</i></b></div>
<div class="ln" style="top:73.26px">6</div>
<div class="cd" style="top:73.26px"><b style="color:#0000ff">input</b> sub_score,<b style="color:#008000">//<i>减</i><i>分</i><i>键</i></b></div>
<div class="ln" style="top:87.22px">7</div>
<div class="ln" style="top:101.18px">8</div>
<div class="cd" style="top:101.18px"><b style="color:#0000ff">output</b> [<b style="color:#ff6030">3</b>:<b style="color:#ff6030">0</b>] score_1,<b style="color:#008000">//1<i>号</i><i>分</i><i>数</i></b></div>
<div class="ln" style="top:115.14px">9</div>
<div class="cd" style="top:115.14px"><b style="color:#0000ff">output</b> [<b style="color:#ff6030">3</b>:<b style="color:#ff6030">0</b>] score_2,<b style="color:#008000">//2<i>号</i><i>分</i><i>数</i></b></div>
<div class="ln" style="top:129.10px">10</div>
<div class="cd" style="top:129.10px"><b style="color:#0000ff">output</b> [<b style="color:#ff6030">3</b>:<b style="color:#ff6030">0</b>] score_3,<b style="color:#008000">//3<i>号</i><i>分</i><i>数</i></b></div>
<div class="ln" style="top:143.06px">11</div>
<div class="cd" style="top:143.06px"><b style="color:#0000ff">output</b> [<b style="color:#ff6030">3</b>:<b style="color:#ff6030">0</b>] score_4<b style="color:#008000">//4<i>号</i><i>分</i><i>数</i></b></div>
<div class="ln" style="top:157.02px">12</div>
<div class="cd" style="top:157.02px">);</div>
<div class="ln" style="top:170.98px">13</div>
<div class="ln" style="top:184.94px">14</div>
<div class="cd" style="top:184.94px"><b style="color:#0000ff">parameter</b> s_idle=<b style="color:#ff6030">5'd0</b>;</div>
<div class="ln" style="top:198.90px">15</div>
<div class="cd" style="top:198.90px"><b style="color:#0000ff">parameter</b> s_start=<b style="color:#ff6030">5'd1</b>;</div>
<div class="ln" style="top:212.86px">16</div>
<div class="cd" style="top:212.86px"><b style="color:#0000ff">parameter</b> s_timedown=<b style="color:#ff6030">5'd2</b>;</div>
<div class="ln" style="top:226.82px">17</div>
<div class="cd" style="top:226.82px"><b style="color:#0000ff">parameter</b> s_tiqian_1=<b style="color:#ff6030">5'd3</b>;</div>
<div class="ln" style="top:240.78px">18</div>
<div class="cd" style="top:240.78px"><b style="color:#0000ff">parameter</b> s_tiqian_2=<b style="color:#ff6030">5'd4</b>;</div>
<div class="ln" style="top:254.74px">19</div>
<div class="cd" style="top:254.74px"><b style="color:#0000ff">parameter</b> s_tiqian_3=<b style="color:#ff6030">5'd5</b>;</div>
<div class="ln" style="top:268.70px">20</div>
<div class="cd" style="top:268.70px"><b style="color:#0000ff">parameter</b> s_tiqian_4=<b style="color:#ff6030">5'd6</b>;</div>
<div class="ln" style="top:282.66px">21</div>
<div class="cd" style="top:282.66px"><b style="color:#0000ff">parameter</b> s_qianda_1=<b style="color:#ff6030">5'd7</b>;</div>
<div class="ln" style="top:296.62px">22</div>
<div class="cd" style="top:296.62px"><b style="color:#0000ff">parameter</b> s_qianda_2=<b style="color:#ff6030">5'd8</b>;</div>
<div class="ln" style="top:310.58px">23</div>
<div class="cd" style="top:310.58px"><b style="color:#0000ff">parameter</b> s_qianda_3=<b style="color:#ff6030">5'd9</b>;</div>
<div class="ln" style="top:324.54px">24</div>
<div class="cd" style="top:324.54px"><b style="color:#0000ff">parameter</b> s_qianda_4=<b style="color:#ff6030">5'd10</b>;</div>
<div class="ln" style="top:338.50px">25</div>
<div class="cd" style="top:338.50px"><b style="color:#0000ff">parameter</b> s_overtime=<b style="color:#ff6030">5'd11</b>;</div>
<div class="ln" style="top:352.46px">26</div>
<div class="ln" style="top:366.42px">27</div>
<div class="cd" style="top:366.42px"><b style="color:#0000ff">reg</b> [<b style="color:#ff6030">3</b>:<b style="color:#ff6030">0</b>] score_1_temp=<b style="color:#ff6030">4'd0</b>;<b style="color:#008000">//1<i>号</i><i>分</i><i>数</i></b></div>
<div class="ln" style="top:380.38px">28</div>
<div class="cd" style="top:380.38px"><b style="color:#0000ff">reg</b> [<b style="color:#ff6030">3</b>:<b style="color:#ff6030">0</b>] score_2_temp=<b style="color:#ff6030">4'd0</b>;<b style="color:#008000">//2<i>号</i><i>分</i><i>数</i></b></div>
<div class="ln" style="top:394.34px">29</div>
<div class="cd" style="top:394.34px"><b style="color:#0000ff">reg</b> [<b style="color:#ff6030">3</b>:<b style="color:#ff6030">0</b>] score_3_temp=<b style="color:#ff6030">4'd0</b>;<b style="color:#008000">//3<i>号</i><i>分</i><i>数</i></b></div>
<div class="ln" style="top:408.30px">30</div>
<div class="cd" style="top:408.30px"><b style="color:#0000ff">reg</b> [<b style="color:#ff6030">3</b>:<b style="color:#ff6030">0</b>] score_4_temp=<b style="color:#ff6030">4'd0</b>;<b style="color:#008000">//4<i>号</i><i>分</i><i>数</i></b></div>
<div class="ln" style="top:422.26px">31</div>
<div class="ln" style="top:436.22px">32</div>
<div class="cd" style="top:436.22px"><b style="color:#0000ff">always</b>@(<b style="color:#0000ff">posedge</b> clk)</div>
<div class="ln" style="top:450.18px">33</div>
<div class="cd" style="top:450.18px">   <b style="color:#0000ff">if</b>(state==s_tiqian_1 | state==s_qianda_1)<b style="color:#008000">//<i>当</i>1<i>号</i><i>抢</i><i>答</i><i>或</i><i>者</i><i>提</i><i>前</i><i>抢</i><i>答</i><i>时</i><i>，</i><i>可</i><i>以</i><i>控</i><i>制</i>1<i>号</i><i>分</i><i>数</i></b></div>
<div class="ln" style="top:464.14px">34</div>
<div class="cd" style="top:464.14px">      <b style="color:#0000ff">if</b>(add_score)<b style="color:#008000">//<i>加</i><i>分</i></b></div>
<div class="ln" style="top:478.10px">35</div>
<div class="cd" style="top:478.10px">         <b style="color:#0000ff">if</b>(score_1_temp==<b style="color:#ff6030">4'd9</b>)</div>
<div class="ln" style="top:492.06px">36</div>
<div class="cd" style="top:492.06px">            score_1_temp&lt;=<b style="color:#ff6030">4'd9</b>;</div>
</div>
<svg style="left:343px;top:62px" width="12" height="12" viewBox="0 0 12 12"><rect x="1.5" y="1.5" width="9" height="9" rx="0.5" fill="#fff" stroke="#111" stroke-width="1"/><path d="M3.2 5.5H9" stroke="#111" stroke-width="1"/></svg>
<div style="left:348.2px;top:74px;width:1px;height:146.5px;background:#333"></div>
<div style="left:348.2px;top:219.8px;width:5.3px;height:1px;background:#333"></div>
<div style="left:293.5px;top:546.5px;width:786.5px;height:15px;background:linear-gradient(#e0e0e0,#ebebeb 15%,#ececec 85%,#e4e4e4)"></div>
<div style="left:309.5px;top:546.8px;width:118.5px;height:14px;background:linear-gradient(#f6f6f6,#e6e6e6 50%,#d8d8d8);border:1px solid #a8a8a8;border-radius:2px;box-sizing:border-box"></div>
<span class="t" style="left:366.00px;top:551.07px;font-size:7px;color:#555;letter-spacing:0.000px;">III</span>
<svg style="left:299px;top:550px" width="5" height="8" viewBox="0 0 5 8"><path d="M4 0.5L0.5 4L4 7.5Z" fill="#555"/></svg>
<div style="left:292.5px;top:561.3px;width:787.5px;height:1px;background:#9a9aa8"></div>
</body></html>
